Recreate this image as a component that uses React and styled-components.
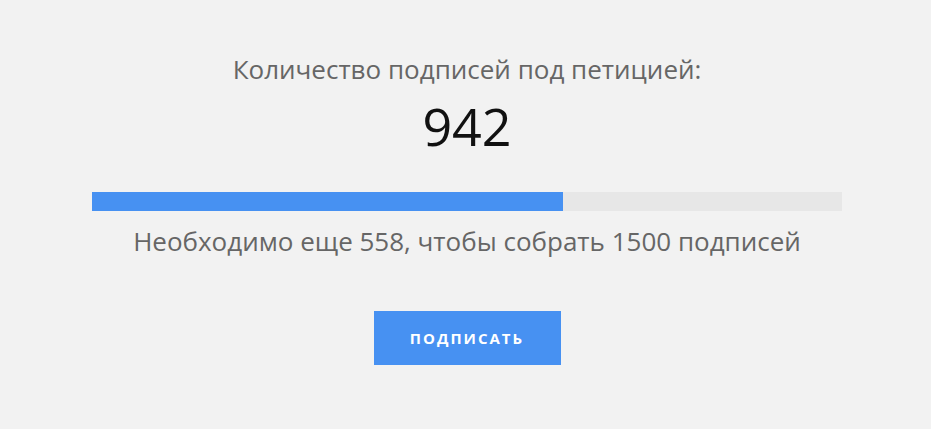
import React from "react";
import styled, { createGlobalStyle } from "styled-components";

const GlobalStyle = createGlobalStyle`
  html, body {
    margin: 0;
    padding: 0;
    background: #f2f2f2;
  }
  body {
    font-family: "Open Sans", "DejaVu Sans", sans-serif;
  }
`;

const Section = styled.section`
  display: flex;
  flex-direction: column;
  align-items: center;
  padding: 51px 89px 0 92px;
  text-align: center;
`;

const Title = styled.h3`
  margin: 0;
  font-size: 26px;
  line-height: 36px;
  font-weight: 400;
  color: #666666;
`;

const Count = styled.div`
  margin-top: 9px;
  font-size: 52px;
  line-height: 60px;
  font-weight: 400;
  color: #111111;
`;

const Track = styled.div`
  align-self: stretch;
  margin-top: 36px;
  height: 19px;
  background: #e7e7e7;
`;

const Fill = styled.div`
  height: 100%;
  background: #4791f2;
`;

const Note = styled.p`
  margin: 12px 0 0;
  font-size: 26px;
  line-height: 36px;
  color: #666666;
`;

const Button = styled.button`
  margin-top: 52px;
  width: 187px;
  height: 54px;
  border: 0;
  background: #4791f2;
  color: #ffffff;
  font-family: inherit;
  font-size: 15px;
  font-weight: 700;
  letter-spacing: 2px;
  text-transform: uppercase;
  cursor: pointer;
`;

const signed = 942;
const goal = 1500;

export default function App() {
  return (
    <>
      <GlobalStyle />
      <Section>
        <Title>Количество подписей под петицией:</Title>
        <Count>{signed}</Count>
        <Track>
          <Fill style={{ width: `${(signed / goal) * 100}%` }} />
        </Track>
        <Note>
          Необходимо еще {goal - signed}, чтобы собрать {goal} подписей
        </Note>
        <Button>Подписать</Button>
      </Section>
    </>
  );
}
